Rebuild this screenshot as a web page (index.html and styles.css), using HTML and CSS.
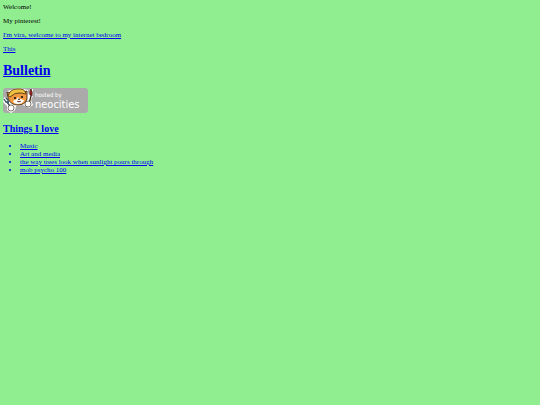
FILE: index.html
```html
<!DOCTYPE html>
<html lang="en">
<head>
  <meta charset="UTF-8">
  <meta name="viewport" content="width=device-width, initial-scale=1.0">
  <title>Welcome!</title>
  <link rel="stylesheet" href="styles.css">
</head>
<body>

  <p>Welcome!</p>
  <p>My pinterest!</p>
  <p><a href="#">I'm vira, welcome to my internet bedroom</a></p>
  <p><a href="#">This</a></p>

  <h1><a href="#">Bulletin</a></h1>

  <!-- Neocities badge -->
  <a class="badge" href="#" aria-label="hosted by neocities">
    <svg width="85" height="25" viewBox="0 0 85 25">
      <rect width="85" height="25" rx="3" fill="#aaa"/>
      <!-- outline around the cat -->
      <path d="M4 9 4 3 8 2Q14-1 21 1L25 2 25 7 27 1 30 1 30 8 28 12 30 17 26 20 22 18 20 17 13 18 12 22 8 25 4 22 4 18 0 14 1 9 5 12Z" fill="#fff"/>
      <!-- head and cap -->
      <path d="M5 10 4 4 9 5 20 4 24 3 24 11Q22 17 15 17 7 17 5 10Z" fill="#f0993f" stroke="#3d2915" stroke-width=".9"/>
      <path d="M5 8Q7 1 14 1 22 0 23 6L18 5Q12 4 7 9Z" fill="#f0c040" stroke="#594018" stroke-width=".9"/>
      <path d="M10 13 14 11 15 9 17 11 21 12Q20 16 15 16 11 16 10 13Z" fill="#fff"/>
      <circle cx="12" cy="10" r="1.1" fill="#111"/>
      <circle cx="19" cy="9" r="1.1" fill="#111"/>
      <path d="M15 11H17L16 12ZM14 13Q16 15 18 13" fill="#a33" stroke="#3d2915" stroke-width=".6"/>
      <!-- fork and brush -->
      <path d="M1 11 3 14 6 14M3 10 5 12 5 15M4 14 9 21" fill="none" stroke="#35505c" stroke-width="1.3"/>
      <path d="M28 8 26 16" stroke="#3d2915" stroke-width="1.3"/>
      <path d="M27 7Q26 3 28 1 30 4 29 8Z" fill="#a51f1b" stroke="#42201c" stroke-width=".8"/>
      <circle cx="8" cy="20" r="3" fill="#fff" stroke="#493a27" stroke-width=".7"/>
      <circle cx="25" cy="16" r="3" fill="#fff" stroke="#493a27" stroke-width=".7"/>
      <text class="badge-small" x="32" y="9">hosted by</text>
      <text class="badge-name" x="32" y="20">neocities</text>
    </svg>
  </a>

  <h2><a href="#">Things I love</a></h2>

  <ul>
    <li><a href="#">Music</a></li>
    <li><a href="#">Art and media</a></li>
    <li><a href="#">the way trees look when sunlight pours through</a></li>
    <li><a href="#">mob psycho 100</a></li>
  </ul>

</body>
</html>
```
FILE: styles.css
```css
body {
  margin: 3px;
  background-color: lightgreen;
  color: #000;
  font-family: "Liberation Serif", "Times New Roman", serif;
  font-size: 7px;
  line-height: 8px;
}
a, li {
  color: #0000ee;
}
p {
  margin: 0 0 6px;
}
h1 {
  margin: 10px 0 9px;
  font-size: 14px;
  line-height: 16px;
}
h2 {
  margin: 10px 0 7px;
  font-size: 10px;
  line-height: 12px;
}
ul {
  margin: 0;
  padding-left: 17px;
}
.badge {
  display: block;
  width: fit-content;
}
.badge svg {
  display: block;
}
.badge text {
  fill: #fff;
  font-family: "DejaVu Sans Condensed", "Open Sans", sans-serif;
}
.badge-small {
  font-size: 6px;
}
.badge-name {
  font-size: 11px;
}
```
